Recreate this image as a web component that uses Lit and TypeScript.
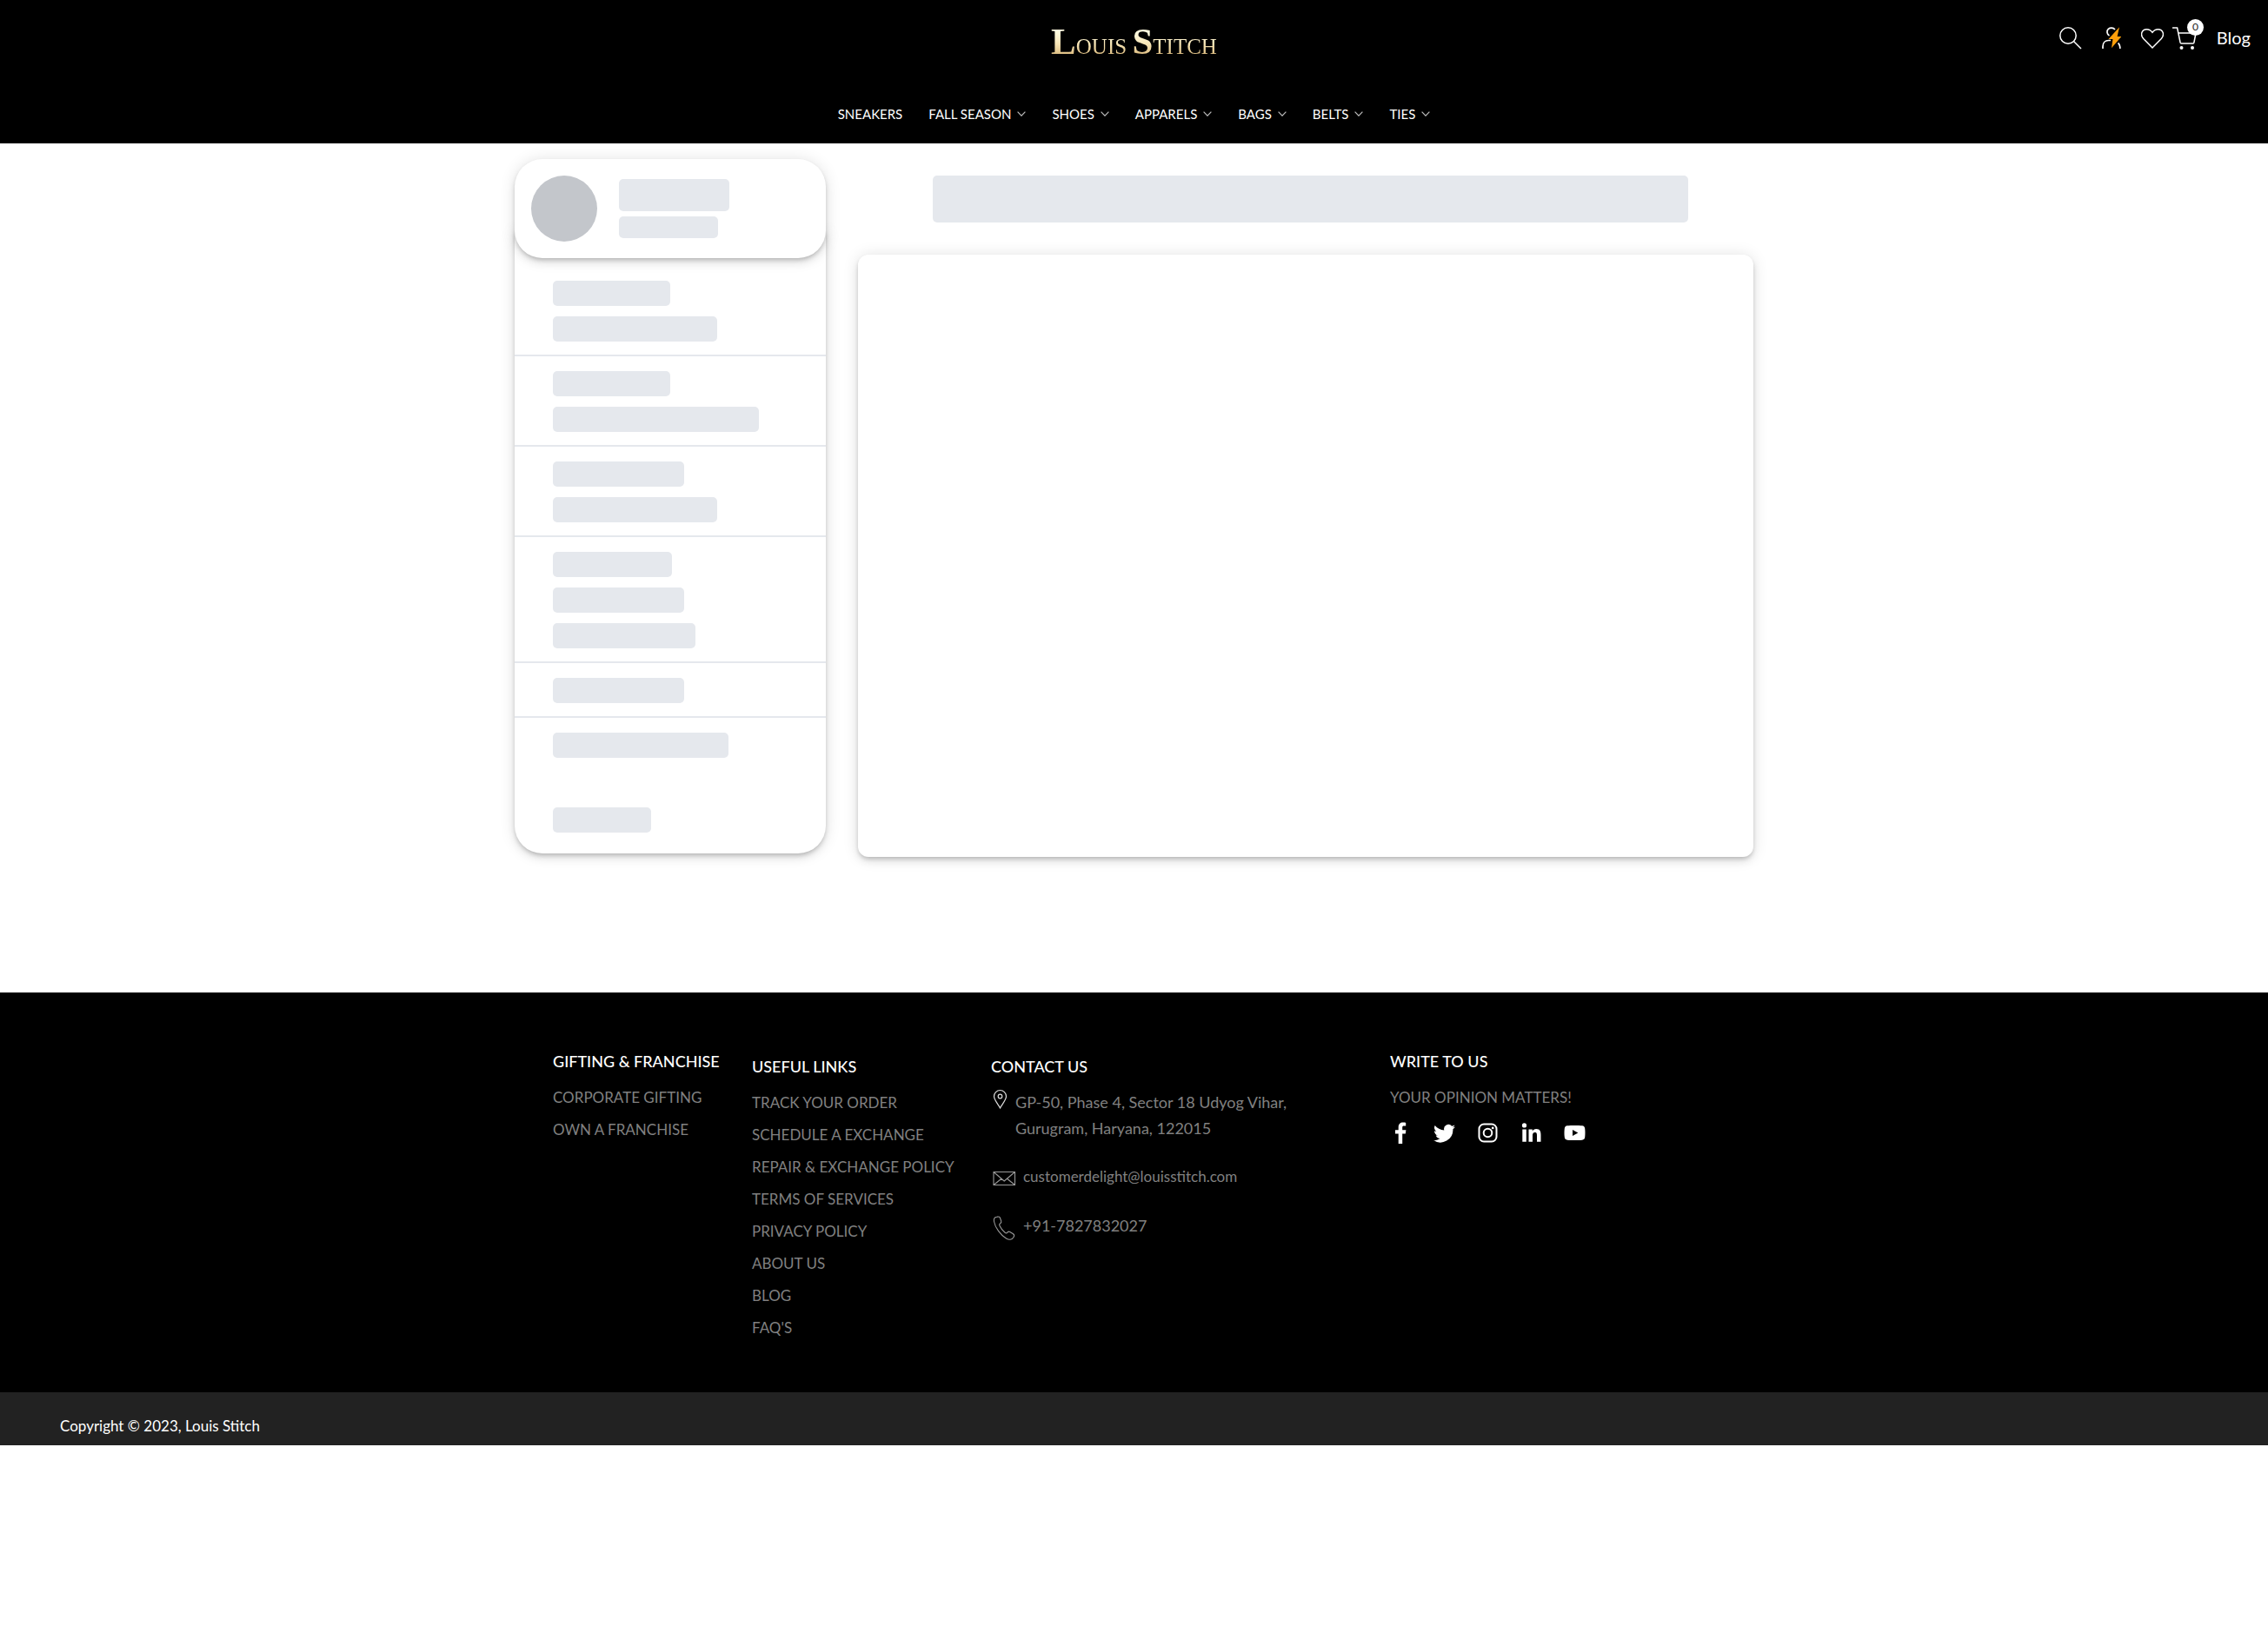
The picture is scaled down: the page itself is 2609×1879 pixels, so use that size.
import { LitElement, html, css, svg } from "lit";
import { customElement } from "lit/decorators.js";
import { styleMap } from "lit/directives/style-map.js";

const NAV = [
  { label: "SNEAKERS", menu: false },
  { label: "FALL SEASON", menu: true },
  { label: "SHOES", menu: true },
  { label: "APPARELS", menu: true },
  { label: "BAGS", menu: true },
  { label: "BELTS", menu: true },
  { label: "TIES", menu: true },
];

// Placeholder bar widths, one array per sidebar section
const SECTIONS = [[135, 189], [135, 237], [151, 189], [137, 151, 164], [151]];

const USEFUL = [
  "TRACK YOUR ORDER",
  "SCHEDULE A EXCHANGE",
  "REPAIR & EXCHANGE POLICY",
  "TERMS OF SERVICES",
  "PRIVACY POLICY",
  "ABOUT US",
  "BLOG",
  "FAQ'S",
];

const SOCIAL = [
  {
    name: "Facebook",
    art: svg`<path d="M18.2 4.6V.9C17.7.8 16.4.6 14.9.6c-3.1 0-5.200 1.900-5.200 5.400v3.200H6v4.400h3.700V25h4.500V13.600h3.600l.6-4.400h-4.200V6.500c0-1.300.4-1.900 1.900-1.900z"/>`,
  },
  {
    name: "Twitter",
    art: svg`<path transform="translate(0 .5)" d="M25 5.100c-.9.400-1.900.7-2.900.8 1.100-.6 1.900-1.600 2.300-2.800-1 .6-2.100 1-3.300 1.200A5.100 5.100 0 0 0 12.300 9C8 8.800 4.300 6.800 1.700 3.600A5.100 5.100 0 0 0 3.300 10.400C2.500 10.400 1.700 10.200 1 9.800v.1c0 2.500 1.800 4.600 4.100 5-.8.2-1.500.2-2.300.1.600 2 2.500 3.500 4.800 3.600A10.300 10.300 0 0 1 0 20.600 14.500 14.500 0 0 0 22.400 7.700c1-.7 1.900-1.600 2.600-2.600z"/>`,
  },
  {
    name: "Instagram",
    art: svg`<g fill="none" stroke="#fff" stroke-width="2"><rect x="2.500" y="2.500" width="20" height="20" rx="5.500"/><circle cx="12.500" cy="12.500" r="4.800"/></g><circle cx="18.200" cy="6.900" r="1.400"/>`,
  },
  {
    name: "LinkedIn",
    art: svg`<circle cx="4.500" cy="3.900" r="2.600"/><path d="M2.300 8.400h4.500v14.300H2.300zM9.500 8.400h4.300v2c.8-1.400 2.300-2.400 4.400-2.400 4.400 0 5.300 2.900 5.300 6.800v7.900H19v-7c0-1.700 0-3.800-2.300-3.800S14 13.700 14 15.600v7.100H9.500z"/>`,
  },
  {
    name: "YouTube",
    art: svg`<path fill-rule="evenodd" d="M4 4.300C8 3.800 17 3.800 21 4.300c2 .3 3 1.400 3.200 3.200.4 3 .4 7 0 10-.2 1.800-1.200 2.900-3.200 3.200-4 .5-13 .5-17 0-2-.3-3-1.400-3.200-3.200-.4-3-.4-7 0-10C1 5.700 2 4.600 4 4.300zM10 9v7l6.300-3.500z"/>`,
  },
];

@customElement("app-root")
export class AppRoot extends LitElement {
  static styles = css`
    :host {
      display: block;
      min-height: 100vh;
      background: #fff;
      color: #fff;
      font-family: Lato, "Open Sans", sans-serif;
      font-size: 17px;
    }
    a {
      color: inherit;
      text-decoration: none;
    }
    svg {
      display: block;
    }
    button {
      padding: 0;
      border: 0;
      background: none;
      color: inherit;
      font: inherit;
      cursor: pointer;
    }
    ul,
    h2,
    p {
      margin: 0;
      padding: 0;
      list-style: none;
    }
    .header {
      background: #000;
      padding: 24px 20px 22px;
      display: flex;
      flex-direction: column;
      gap: 41px;
    }
    .topbar {
      display: grid;
      grid-template-columns: 1fr auto 1fr;
    }
    .logo {
      grid-column: 2;
      padding-top: 6px;
      font-family: "Liberation Serif", serif;
      font-size: 25px;
      line-height: 48px;
      background: linear-gradient(#fffbe0 25%, #f6e4b4 50%, #dcbc80 72%);
      background-clip: text;
      -webkit-background-clip: text;
      color: transparent;
    }
    .initial {
      font-size: 43px;
      font-weight: bold;
      line-height: 0;
    }
    .actions {
      display: flex;
      align-items: center;
      align-self: start;
      justify-content: flex-end;
      gap: 23px;
      height: 40px;
    }
    .pair {
      display: flex;
      gap: 10px;
    }
    .cart {
      position: relative;
    }
    .badge {
      position: absolute;
      top: -9px;
      left: 17px;
      width: 19px;
      height: 19px;
      border-radius: 50%;
      background: #fff;
      color: #222;
      font-size: 12px;
      line-height: 18px;
      text-align: center;
    }
    .blog {
      font-size: 20px;
      line-height: 24px;
      padding-bottom: 2px;
    }
    .nav {
      display: flex;
      justify-content: center;
      gap: 30px;
      font-size: 15px;
      line-height: 24px;
    }
    .nav-link {
      display: flex;
      align-items: center;
      gap: 7px;
    }
    .account {
      box-sizing: border-box;
      max-width: 1425px;
      margin: 0 auto;
      padding: 18px 0 156px;
      display: grid;
      grid-template-columns: 358px 1fr;
      align-items: start;
      gap: 37px;
    }
    .raised {
      background: #fff;
      box-shadow: 0 3px 5px -1px rgba(0, 0, 0, 0.2),
        0 6px 10px rgba(0, 0, 0, 0.06), 0 1px 18px rgba(0, 0, 0, 0.12);
    }
    .profile {
      position: relative;
      z-index: 1;
      display: flex;
      align-items: center;
      gap: 25px;
      padding: 19px;
      border-radius: 32px;
    }
    .avatar {
      width: 76px;
      height: 76px;
      border-radius: 50%;
      background: #c3c6cb;
    }
    .names {
      display: grid;
      gap: 6px;
    }
    .bar {
      height: 29px;
      border-radius: 5px;
      background: #e5e8ed;
    }
    .name {
      width: 127px;
      height: 37px;
    }
    .mail {
      width: 114px;
      height: 25px;
    }
    .sections {
      margin-top: -32px;
      padding: 41px 0 24px;
      border-radius: 0 0 32px 32px;
    }
    .section {
      display: grid;
      gap: 12px;
      padding: 17px 44px 15px;
      border-bottom: 2px solid #e5e8ed;
    }
    .section.last {
      gap: 57px;
      padding-bottom: 0;
      border-bottom: 0;
    }
    .main {
      padding-top: 19px;
    }
    .title {
      height: 54px;
      margin: 0 75px 37px 86px;
    }
    .panel {
      height: 693px;
      border-radius: 12px;
    }
    .footer {
      background: #000;
      padding: 64px 0 56px;
    }
    .columns {
      max-width: 1337px;
      margin: 0 auto;
      display: grid;
      grid-template-columns: 229px 275px 459px 1fr;
      line-height: 37px;
      color: #808080;
    }
    .lowered {
      padding-top: 6px;
    }
    .heading {
      margin-bottom: 8px;
      color: #fff;
      font-size: 18px;
      font-weight: 500;
      line-height: 30px;
    }
    .contact {
      display: grid;
      gap: 26px;
      padding-top: 3px;
      font-style: normal;
      line-height: 30px;
    }
    .contact-row {
      display: flex;
      gap: 8px;
      padding-left: 2px;
    }
    .wide {
      font-size: 18px;
    }
    .social {
      display: flex;
      gap: 25px;
      padding-top: 3px;
    }
    .copyright {
      padding: 27px 69px 10px;
      background: #222;
      line-height: 24px;
    }
  `;

  private bar(width: number) {
    return html`<div class="bar" style=${styleMap({ width: `${width}px` })}></div>`;
  }

  private link(label: string) {
    return html`<li><a href="#">${label}</a></li>`;
  }

  private renderHeader() {
    return html`<header class="header">
      <div class="topbar">
        <a class="logo" href="#"><span class="initial">L</span>OUIS <span class="initial">S</span>TITCH</a>
        <div class="actions">
          <button aria-label="Search">
            <svg width="26" height="26" fill="none" stroke="#fff" stroke-width="1.500">
              <circle cx="10" cy="10" r="9.200" /><path d="M16.500 16.500 25 25" />
            </svg>
          </button>
          <button aria-label="Account">
            <svg width="22" height="26" fill="none" stroke="#fff" stroke-width="1.700">
              <path d="M8.500 10C5.500 8.500 5.200 4.400 7.300 2.400 9.500.6 13 .6 15 3M1 25v-2.500c0-4.600 3-7 6.500-7H10M18.500 18.500c1.700 1.200 2.300 3 2.300 6.500" />
              <path d="M20 .3 7.500 14h5L11 24.200 22.500 11h-4.900z" fill="#ff9f0a" stroke="none" />
            </svg>
          </button>
          <div class="pair">
            <button aria-label="Wishlist">
              <svg width="26" height="26" fill="none" stroke="#fff" stroke-width="1.500">
                <path d="M13 24 2.700 13.500C-1.700 8.500 1.200 2.700 6.500 2.700c2.900 0 4.800 1.300 6.500 3.600 1.700-2.300 3.600-3.600 6.500-3.600 5.300 0 8.200 5.800 3.800 10.800z" />
              </svg>
            </button>
            <button class="cart" aria-label="Cart">
              <svg width="28" height="26" fill="none" stroke="#fff" stroke-width="1.500">
                <path d="M0 1h5.600l3.500 17c.2.600.6.900 1.200.9h13.500c.6 0 1-.3 1.100-.9L27 7H7" />
                <circle cx="10.500" cy="24" r="2" fill="#fff" stroke="none" />
                <circle cx="23" cy="24" r="2" fill="#fff" stroke="none" />
              </svg>
              <span class="badge">0</span>
            </button>
          </div>
          <a class="blog" href="#">Blog</a>
        </div>
      </div>
      <nav class="nav">
        ${NAV.map(
          (item) => html`<a class="nav-link" href="#">${item.label}
            ${item.menu
              ? html`<svg width="10" height="6" fill="none" stroke="#bbb" stroke-width="1.200"><path d="m.6.600 4.400 4.600L9.400.6" /></svg>`
              : ""}</a>`
        )}
      </nav>
    </header>`;
  }

  private renderAccount() {
    return html`<main class="account">
      <aside>
        <div class="profile raised">
          <div class="avatar"></div>
          <div class="names">
            <div class="bar name"></div>
            <div class="bar mail"></div>
          </div>
        </div>
        <div class="sections raised">
          ${SECTIONS.map(
            (bars) => html`<div class="section">${bars.map((w) => this.bar(w))}</div>`
          )}
          <div class="section last">${this.bar(202)}${this.bar(113)}</div>
        </div>
      </aside>
      <section class="main">
        <div class="bar title"></div>
        <div class="panel raised"></div>
      </section>
    </main>`;
  }

  private renderFooter() {
    return html`<footer>
      <div class="footer">
        <div class="columns">
          <section>
            <h2 class="heading">GIFTING &amp; FRANCHISE</h2>
            <ul>
              ${this.link("CORPORATE GIFTING")}${this.link("OWN A FRANCHISE")}
            </ul>
          </section>
          <section class="lowered">
            <h2 class="heading">USEFUL LINKS</h2>
            <ul>
              ${USEFUL.map((label) => this.link(label))}
            </ul>
          </section>
          <section class="lowered">
            <h2 class="heading">CONTACT US</h2>
            <address class="contact">
              <div class="contact-row wide">
                <svg width="18" height="24" fill="none" stroke="#ddd" stroke-width="1.200">
                  <path d="M8.500 22C6.500 18 1.500 12.500 1.500 8.500a7 7 0 0 1 14 0c0 4-5 9.500-7 13.500z" />
                  <circle cx="8.500" cy="8.500" r="2.300" />
                </svg>
                <p>GP-50, Phase 4, Sector 18 Udyog Vihar,<br />Gurugram, Haryana, 122015</p>
              </div>
              <a class="contact-row" href="mailto:customerdelight@louisstitch.com">
                <svg width="27" height="28" fill="none" stroke="#999" stroke-width="1.100">
                  <path d="M1 9.500h24.500v15H1zM1 9.500 13.200 20 25.500 9.500M1 24.500l9-7.300M25.500 24.500l-9-7.300" />
                </svg>
                customerdelight@louisstitch.com
              </a>
              <a class="contact-row wide" href="tel:+917827832027">
                <svg width="27" height="34" fill="none" stroke="#999" stroke-width="1.100">
                  <path d="M4.500 5.200C2 5.500 1 7.500 1.500 10.500c1.200 7 7.500 15.500 14 19.500 3 1.800 6.500 2.200 8.700-1.800.9-1.700.6-2.500-.7-3.400l-3.700-2.300c-1.300-.7-2.200-.3-3 .6-.8 1-1.600 1-2.700.1-3-2.400-4.800-5-6.200-8-.6-1.300-.3-2 .7-2.500 1.300-.7 1.500-1.500 1.100-2.800L8.300 6C7.600 4.500 6.500 4.900 4.500 5.200z" />
                </svg>
                +91-7827832027
              </a>
            </address>
          </section>
          <section>
            <h2 class="heading">WRITE TO US</h2>
            <p>YOUR OPINION MATTERS!</p>
            <div class="social">
              ${SOCIAL.map(
                (s) => html`<a href="#" aria-label=${s.name}>
                  <svg width="25" height="40" viewBox="0 -7 25 40" fill="#fff">${s.art}</svg>
                </a>`
              )}
            </div>
          </section>
        </div>
      </div>
      <p class="copyright">Copyright © 2023, Louis Stitch</p>
    </footer>`;
  }

  render() {
    return html`${this.renderHeader()}${this.renderAccount()}${this.renderFooter()}`;
  }
}
